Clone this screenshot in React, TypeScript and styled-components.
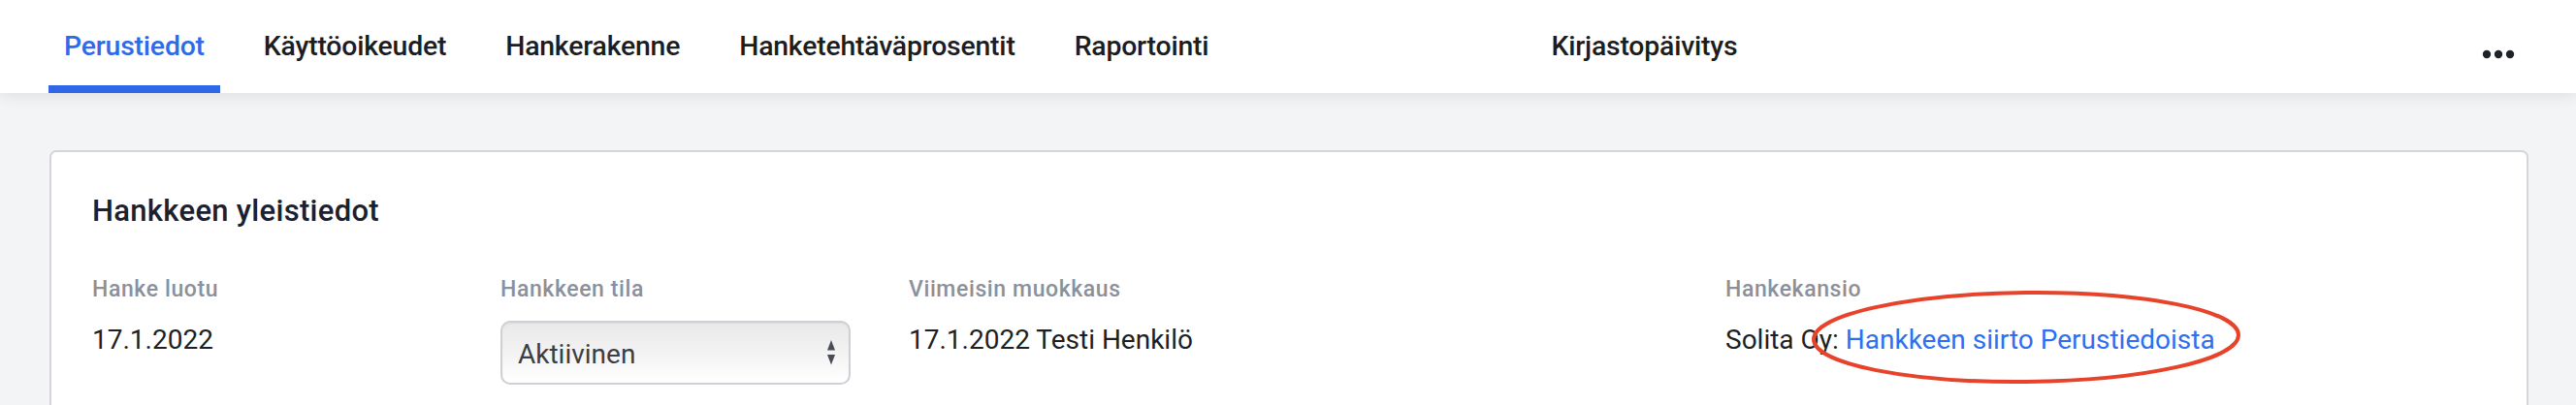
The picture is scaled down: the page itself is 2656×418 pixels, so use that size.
import React from "react";
import styled, { createGlobalStyle } from "styled-components";

const GlobalStyle = createGlobalStyle`
  html, body {
    margin: 0;
    padding: 0;
    background: #f3f4f6;
    font-family: Roboto, "Liberation Sans", Arial, sans-serif;
    -webkit-font-smoothing: antialiased;
  }
`;

const tabs = ["Perustiedot", "Käyttöoikeudet", "Hankerakenne", "Hanketehtäväprosentit", "Raportointi"];

const fields = [
  { label: "Hanke luotu", value: "17.1.2022", col: 1 },
  { label: "Viimeisin muokkaus", value: "17.1.2022 Testi Henkilö", col: 3 },
];

const App: React.FC = () => {
  return (
    <Page>
      <GlobalStyle />
      <Header>
        <TabGroup>
          {tabs.map((t, i) => (
            <Tab key={t} active={i === 0}>
              {t}
            </Tab>
          ))}
        </TabGroup>
        <TabGroup offset={292}>
          <Tab>Kirjastopäivitys</Tab>
        </TabGroup>
        <MoreButton aria-label='Lisää'>
          <svg width='34' height='10' viewBox='0 0 34 10'>
            <circle cx='5' cy='5' r='4.2' fill='#1f2329' />
            <circle cx='17' cy='5' r='4.2' fill='#1f2329' />
            <circle cx='29' cy='5' r='4.2' fill='#1f2329' />
          </svg>
        </MoreButton>
      </Header>
      <Content>
        <Card>
          <Title>Hankkeen yleistiedot</Title>
          <FieldGrid>
            {fields.map((f) => (
              <Field key={f.label} col={f.col}>
                <Label>{f.label}</Label>
                <Value>{f.value}</Value>
              </Field>
            ))}
            <Field col={2}>
              <Label>Hankkeen tila</Label>
              <SelectBox>
                <span>Aktiivinen</span>
                <svg width='8' height='26' viewBox='0 0 8 26'>
                  <path d='M4 0 L8 10.5 L0 10.5 Z' fill='#4a4d53' />
                  <path d='M0 15 L8 15 L4 25.5 Z' fill='#4a4d53' />
                </svg>
              </SelectBox>
            </Field>
            <Field col={5}>
              <Label>Hankekansio</Label>
              <Value>
                Solita Oy: <Link href='#'>Hankkeen siirto Perustiedoista</Link>
                <Annotation width='448' height='100' viewBox='0 0 448 100'>
                  <ellipse
                    cx='224'
                    cy='50'
                    rx='219'
                    ry='46'
                    fill='none'
                    stroke='#e6432a'
                    strokeWidth='4'
                    transform='rotate(-0.6 224 50)'
                  />
                </Annotation>
              </Value>
            </Field>
          </FieldGrid>
        </Card>
      </Content>
    </Page>
  );
};

const Page = styled.div`
  min-height: 418px;
  background: #f3f4f6;
`;
const Header = styled.nav`
  display: flex;
  align-items: stretch;
  height: 96px;
  padding: 0 63px 0 50px;
  background: #fff;
  box-shadow: 0 4px 14px rgba(0, 0, 0, 0.08);
  position: relative;
  z-index: 1;
`;
const TabGroup = styled.div<{ offset?: number }>`
  display: flex;
  gap: 29px;
  margin-left: ${(p) => (p.offset ? `${p.offset + 29}px` : "0")};
`;
const Tab = styled.div<{ active?: boolean }>`
  display: flex;
  align-items: center;
  padding: 6px 16px 0;
  box-sizing: border-box;
  font-size: 28.4px;
  font-weight: 500;
  letter-spacing: -0.2px;
  color: ${(p) => (p.active ? "#2f6be8" : "#1c1d1f")};
  border-bottom: 8px solid ${(p) => (p.active ? "#3067e6" : "transparent")};
`;
const MoreButton = styled.div`
  margin-left: auto;
  display: flex;
  align-items: center;
  padding-top: 16px;
`;
const Content = styled.main`
  padding: 59px 49px 0 51px;
`;
const Card = styled.section`
  background: #fff;
  border: 2px solid #d3d5da;
  border-bottom: none;
  border-radius: 7px 7px 0 0;
  padding: 43px 42px 40px;
  min-height: 240px;
`;
const Title = styled.h2`
  margin: 0;
  font-size: 31px;
  line-height: 36px;
  font-weight: 500;
  letter-spacing: 0.3px;
  color: #1b2130;
`;
const FieldGrid = styled.div`
  display: grid;
  grid-template-columns: repeat(6, 363px);
  column-gap: 58px;
  margin-top: 49px;
`;
const Field = styled.div<{ col: number }>`
  grid-column: ${(p) => p.col};
  grid-row: 1;
  display: flex;
  flex-direction: column;
  align-items: flex-start;
`;
const Label = styled.div`
  font-size: 23px;
  line-height: 27px;
  font-weight: 500;
  letter-spacing: 0.6px;
  color: #8b909b;
`;
const Value = styled.div`
  position: relative;
  margin-top: 22px;
  font-size: 28px;
  line-height: 33px;
  color: #1d1f23;
  white-space: nowrap;
`;
const Link = styled.a`
  color: #2f6ff0;
  text-decoration: none;
`;
const SelectBox = styled.div`
  margin-top: 19px;
  width: 361px;
  height: 66px;
  box-sizing: border-box;
  display: flex;
  align-items: center;
  justify-content: space-between;
  padding: 0 14px 0 16px;
  border: 2px solid #cdd0d4;
  border-radius: 10px;
  background: linear-gradient(#e9e9e9, #f4f4f4 55%, #ffffff);
  box-shadow: inset 0 1px 2px rgba(0, 0, 0, 0.06);
  font-size: 28px;
  color: #3b3e43;
  span {
    margin-top: 2px;
  }
`;
const Annotation = styled.svg`
  position: absolute;
  left: 86px;
  top: -36px;
  pointer-events: none;
`;

export default App;
